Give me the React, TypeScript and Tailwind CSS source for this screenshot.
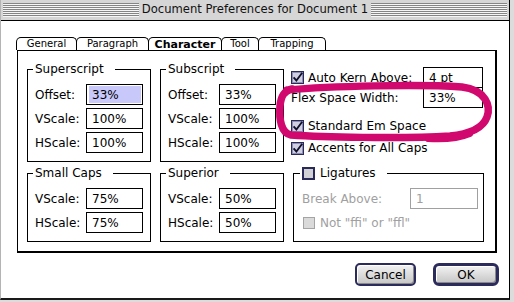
import React from "react";

function Stripes() {
  return (
    <div className="flex-1 h-[14px] bg-[image:repeating-linear-gradient(to_bottom,#858585_0px,#858585_1px,#f6f6f6_1px,#f6f6f6_2px)]" />
  );
}

function Box({
  checked,
  disabled,
  strong,
}: {
  checked?: boolean;
  disabled?: boolean;
  strong?: boolean;
}) {
  if (disabled) {
    return (
      <svg width="12" height="12" viewBox="0 0 12 12" className="shrink-0">
        <rect x="0.5" y="0.5" width="11" height="11" fill="#dadada" stroke="#a4a4a4" />
      </svg>
    );
  }
  return (
    <svg width="13" height="13" viewBox="0 0 13 13" className="shrink-0">
      <rect
        x={strong ? 1 : 0.5}
        y={strong ? 1 : 0.5}
        width={strong ? 11 : 12}
        height={strong ? 11 : 12}
        fill={strong ? "#d2d2d6" : "#d0d0e2"}
        stroke="#2a2a58"
        strokeWidth={strong ? 2 : 1}
      />
      {!strong && (
        <rect x="1.5" y="1.5" width="10" height="10" fill="none" stroke="#8e8eb4" strokeWidth="1" />
      )}
      {checked && (
        <path d="M2.6 6.4 L5.4 9.6 L11.2 1.8" stroke="#10102a" strokeWidth="1.9" fill="none" />
      )}
    </svg>
  );
}

function Field({
  value,
  w,
  selected,
  disabled,
}: {
  value: string;
  w: string;
  selected?: boolean;
  disabled?: boolean;
}) {
  return (
    <div
      className={`h-[21px] border bg-white flex items-stretch ${
        disabled ? "border-[#a0a0a0] text-[#a0a0a0]" : "border-black text-black"
      } ${w}`}
    >
      {selected ? (
        <div className="flex-1 my-[1px] ml-[2px] mr-[1px] bg-[#c8c8fa] flex items-center pl-[3px]">{value}</div>
      ) : (
        <div className="flex-1 flex items-center pl-[5px]">{value}</div>
      )}
    </div>
  );
}

function Row({ label, value, selected }: { label: string; value: string; selected?: boolean }) {
  return (
    <div className="flex items-center justify-between h-[21px]">
      <span>{label}</span>
      <Field value={value} w="w-[57px]" selected={selected} />
    </div>
  );
}

function Group({ title, children }: { title: string; children: React.ReactNode }) {
  return (
    <fieldset className="border border-black px-[7px] pt-[8px] pb-[8px]">
      <legend className="ml-[-2px] pl-[2px] pr-[11px] leading-[14px]">{title}</legend>
      <div className="flex flex-col gap-[3px]">{children}</div>
    </fieldset>
  );
}

function Tab({ w, active, children }: { w: string; active?: boolean; children: React.ReactNode }) {
  return (
    <div
      className={`-ml-px first:ml-0 h-[13px] border-t border-x border-black rounded-t-[5px] flex items-center justify-center leading-none ${
        active ? "font-bold text-[11px]" : "text-[10px]"
      } ${w}`}
    >
      {children}
    </div>
  );
}

function Button({ w, strong, children }: { w: string; strong?: boolean; children: React.ReactNode }) {
  return (
    <div
      className={`h-[23px] flex items-center justify-center text-[12px] bg-[image:linear-gradient(#f2f2f2,#c6c6c6)] shadow-[inset_1px_1px_0_#ffffff,inset_-1px_-1px_0_#8a8a8a] border-[#2c2c5c] ${
        strong ? "border-[3px] rounded-[6px]" : "border-2 rounded-[5px]"
      } ${w}`}
    >
      {children}
    </div>
  );
}

export default function App() {
  return (
    <div className="w-[514px] h-[302px] bg-[#dcdcdc] relative overflow-hidden font-['DejaVu_Sans',sans-serif] text-[12px] text-black">
      <div className="w-[510px] h-[300px] flex flex-col bg-white border-l border-[#b4b4b4] border-r border-r-black border-b-2 border-b-[#1a1a1a]">
        {/* title bar */}
        <div className="h-[21px] shrink-0 bg-[#d6d6d6] border-b border-black flex items-center px-[2px] gap-[3px]">
          <Stripes />
          <span className="text-[11.6px] leading-none text-[#111]">Document Preferences for Document 1</span>
          <Stripes />
        </div>

        {/* body */}
        <div className="flex-1 flex flex-col pt-[16px] pl-[15px]">
          <div className="flex">
            <Tab w="w-[61px]">General</Tab>
            <Tab w="w-[73px]">Paragraph</Tab>
            <Tab w="w-[74px]" active>
              Character
            </Tab>
            <Tab w="w-[38px]">Tool</Tab>
            <Tab w="w-[68px]">Trapping</Tab>
          </div>

          <div className="ml-px w-[480px] h-[203px] border-t border-l border-r-2 border-b-2 border-black flex pt-[11px] pl-[9px]">
            <div className="grid grid-cols-[124px_124px] gap-x-[9px] gap-y-[4px] content-start">
              <Group title="Superscript">
                <Row label="Offset:" value="33%" selected />
                <Row label="VScale:" value="100%" />
                <Row label="HScale:" value="100%" />
              </Group>
              <Group title="Subscript">
                <Row label="Offset:" value="33%" />
                <Row label="VScale:" value="100%" />
                <Row label="HScale:" value="100%" />
              </Group>
              <Group title="Small Caps">
                <Row label="VScale:" value="75%" />
                <Row label="HScale:" value="75%" />
              </Group>
              <Group title="Superior">
                <Row label="VScale:" value="50%" />
                <Row label="HScale:" value="50%" />
              </Group>
            </div>

            <div className="ml-[7px] w-[192px] flex flex-col pt-[5px]">
              <div className="flex items-center h-[21px]">
                <Box checked />
                <span className="ml-[4px]">Auto Kern Above:</span>
                <div className="ml-auto">
                  <Field value="4 pt" w="w-[60px]" />
                </div>
              </div>
              <div className="-mt-px flex items-center h-[21px]">
                <span>Flex Space Width:</span>
                <div className="ml-auto">
                  <Field value="33%" w="w-[60px]" />
                </div>
              </div>
              <div className="mt-[7px] flex items-center h-[22px]">
                <Box checked />
                <span className="ml-[4px]">Standard Em Space</span>
              </div>
              <div className="flex items-center h-[22px]">
                <Box checked />
                <span className="ml-[4px]">Accents for All Caps</span>
              </div>

              <fieldset className="mt-[7px] ml-[2px] w-[191px] border border-black pl-[8px] pr-[5px] pt-[8px] pb-[11px]">
                <legend className="ml-[-2px] pl-[2px] pr-[11px] leading-[14px]">
                  <span className="flex items-center gap-[5px]">
                    <Box strong />
                    <span>Ligatures</span>
                  </span>
                </legend>
                <div className="flex items-center justify-between h-[21px] text-[#a0a0a0]">
                  <span>Break Above:</span>
                  <Field value="1" w="w-[68px]" disabled />
                </div>
                <div className="mt-[7px] flex items-center h-[14px] text-[#a0a0a0]">
                  <span className="ml-px">
                    <Box disabled />
                  </span>
                  <span className="ml-[5px]">Not "ffi" or "ffl"</span>
                </div>
              </fieldset>
            </div>
          </div>

          <div className="mt-[10px] flex justify-end gap-[17px] pr-[10px]">
            <Button w="w-[61px]">Cancel</Button>
            <Button w="w-[66px]" strong>
              OK
            </Button>
          </div>
        </div>
      </div>

      {/* hand-drawn annotation */}
      <svg className="absolute left-0 top-0 pointer-events-none" width="514" height="302" viewBox="0 0 514 302">
        <path
          d="M287 90 C330 86 420 84 462 87 C486 90 491 106 487 117 C483 128 470 134 450 136 C400 139 320 137 291 135 C281 133 279 119 280 106 C281 96 284 91 292 89"
          stroke="#d1086e"
          strokeWidth="7.5"
          strokeLinecap="round"
          fill="none"
        />
        <path d="M470 134 C458 139 444 140 428 139" stroke="#d1086e" strokeWidth="6" strokeLinecap="round" fill="none" />
      </svg>
    </div>
  );
}
